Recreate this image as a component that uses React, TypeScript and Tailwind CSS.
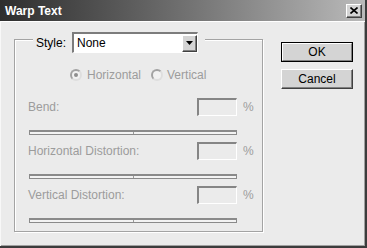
import React from "react";

function Radio({ checked = false }: { checked?: boolean }) {
  return (
    <span className="flex h-[12px] w-[12px] items-center justify-center rounded-full border-2 border-t-[#a2a2a2] border-l-[#a2a2a2] border-b-[#dedede] border-r-[#dedede] bg-[#f1f1f1]">
      {checked && <span className="h-[4px] w-[4px] rounded-full bg-[#8e8e8e]" />}
    </span>
  );
}

function FieldRow({ label }: { label: string }) {
  return (
    <div className="flex h-[18px] items-center pl-[13px] pr-[8px]">
      <span className="flex-1 text-[12px] leading-none text-[#9c9c9c]">{label}</span>
      <div className="h-[18px] w-[40px] border-t-2 border-l-2 border-b border-r border-t-[#858585] border-l-[#858585] border-b-white border-r-white" />
      <span className="ml-[6px] w-[11px] text-[12px] leading-none text-[#9c9c9c]">%</span>
    </div>
  );
}

function Slider() {
  return (
    <div className="ml-[14px] flex h-[5px] w-[208px] border-t-2 border-x border-b border-[#8a8a8a] bg-[#f3f3f3]">
      <div className="flex-1 border-r border-[#9a9a9a]" />
      <div className="flex-1" />
    </div>
  );
}

const fields = ["Bend:", "Horizontal Distortion:", "Vertical Distortion:"];

export default function App() {
  return (
    <div className="flex h-[248px] w-[367px] flex-col border-r-2 border-b-2 border-[#3c3c3c] bg-[#ebebeb] font-['Liberation_Sans',Arial,sans-serif] shadow-[inset_-1px_-1px_0_#a0a0a0]">
      {/* Title bar */}
      <div className="flex h-[21px] items-center justify-between bg-gradient-to-r from-[#2e2e2e] to-[#bababa] pl-[5px] pr-[3px]">
        <span className="text-[12px] font-bold leading-none text-white">Warp Text</span>
        <button className="flex h-[14px] w-[16px] items-center justify-center border border-t-white border-l-white border-b-[#404040] border-r-[#404040] bg-[#d4d4d4] shadow-[inset_-1px_-1px_0_#808080]">
          <svg width="8" height="7" viewBox="0 0 8 7">
            <path d="M0.5 0.5 L7.5 6.5 M7.5 0.5 L0.5 6.5" stroke="#000" strokeWidth="1.6" />
          </svg>
        </button>
      </div>

      {/* Body */}
      <div className="flex flex-1 items-start border-t border-l border-t-white border-l-[#f8f8f8] pl-[13px] pt-[17px]">
        {/* Group box */}
        <div className="relative h-[193px] w-[249px] border border-[#a3a3a3] shadow-[inset_1px_1px_0_#fff,1px_1px_0_#fff]">
          <div className="absolute left-[18px] top-[-8px] flex h-[21px] items-center bg-[#ebebeb] pl-[3px] pr-[7px]">
            <span className="text-[12px] leading-none text-black">Style:</span>
            <div className="ml-[6px] flex h-[21px] w-[126px] items-center border-t-2 border-l-2 border-b border-r border-t-[#7c7c7c] border-l-[#7c7c7c] border-b-white border-r-white bg-white">
              <span className="flex-1 pl-[3px] text-[12px] leading-none text-black">None</span>
              <div className="flex h-[17px] w-[15px] items-center justify-center border border-t-white border-l-white border-b-[#404040] border-r-[#404040] bg-[#d4d4d4] shadow-[inset_-1px_-1px_0_#808080]">
                <svg width="7" height="4" viewBox="0 0 7 4">
                  <path d="M0 0 H7 L3.5 4 Z" fill="#000" />
                </svg>
              </div>
            </div>
          </div>

          <div className="flex flex-col pt-[28px]">
            <div className="flex h-[14px] items-center pl-[55px]">
              <Radio checked />
              <span className="ml-[5px] text-[12px] leading-none text-[#9c9c9c]">Horizontal</span>
              <span className="ml-[10px]">
                <Radio />
              </span>
              <span className="ml-[4px] text-[12px] leading-none text-[#9c9c9c]">Vertical</span>
            </div>

            <div className="mt-[16px] flex flex-col">
              {fields.map((f, i) => (
                <div key={i} className={i === 0 ? "" : "mt-[7px]"}>
                  <FieldRow label={f} />
                  <div className="mt-[14px]">
                    <Slider />
                  </div>
                </div>
              ))}
            </div>
          </div>
        </div>

        {/* Buttons */}
        <div className="ml-[18px] mt-[3px] flex w-[72px] flex-col gap-[7px]">
          <button className="h-[20px] border border-black">
            <div className="flex h-full items-center justify-center border border-t-white border-l-white border-b-[#808080] border-r-[#808080] bg-[#d4d4d4] text-[12px] leading-none text-black">
              OK
            </div>
          </button>
          <button className="flex h-[20px] items-center justify-center border border-t-white border-l-white border-b-[#404040] border-r-[#404040] bg-[#d4d4d4] text-[12px] leading-none text-black shadow-[inset_-1px_-1px_0_#808080]">
            Cancel
          </button>
        </div>
      </div>
    </div>
  );
}
